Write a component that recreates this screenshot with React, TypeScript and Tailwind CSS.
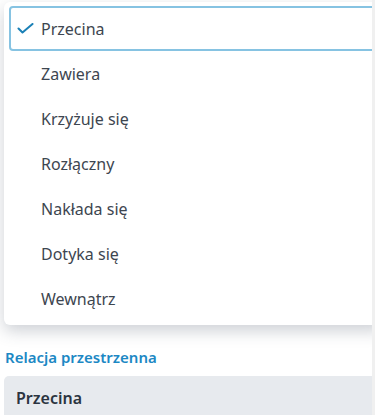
import React from "react";

const items = ["Przecina", "Zawiera", "Krzyżuje się", "Rozłączny", "Nakłada się", "Dotyka się", "Wewnątrz"];

export default function App() {
  return (
    <div
      className="relative w-[375px] h-[415px] overflow-hidden bg-white flex"
      style={{ fontFamily: '"Noto Sans", "Open Sans", sans-serif' }}
    >
      <div className="relative w-[372px] h-full overflow-hidden">
        <div className="pt-[346px] pl-[4px]">
          <div className="pl-[1px] text-[15px] leading-[22px] font-semibold text-[#1c88c4]">Relacja przestrzenna</div>
          <div className="mt-[8px] w-[380px] h-[44px] rounded-[5px] bg-[#e7eaee] pl-[12px] flex items-center text-[16px] font-semibold text-[#2b3440]">
            Przecina
          </div>
        </div>
        <div className="absolute top-[2px] left-[4px] w-[380px] rounded-[6px] bg-white shadow-[0_6px_16px_rgba(60,70,90,0.25)] py-[4px] pl-[5px]">
          {items.map((t, i) => (
            <div
              key={t}
              className={
                i === 0
                  ? "h-[45px] flex items-center rounded-[4px] border-2 border-[#86c3e2] pl-[6px]"
                  : "h-[45px] flex items-center pl-[8px]"
              }
            >
              <span className="w-[24px] flex items-center">
                {i === 0 && (
                  <svg width="17" height="11" viewBox="0 0 17 11" fill="none">
                    <path d="M1.5 5.5 L5.5 9.5 L15.5 1" stroke="#1a80b6" strokeWidth="2" strokeLinecap="round" strokeLinejoin="round" />
                  </svg>
                )}
              </span>
              <span className="text-[16px] text-[#3d4650]">{t}</span>
            </div>
          ))}
        </div>
      </div>
      <div className="w-[3px] h-full bg-[#f0f0f0]" />
    </div>
  );
}
